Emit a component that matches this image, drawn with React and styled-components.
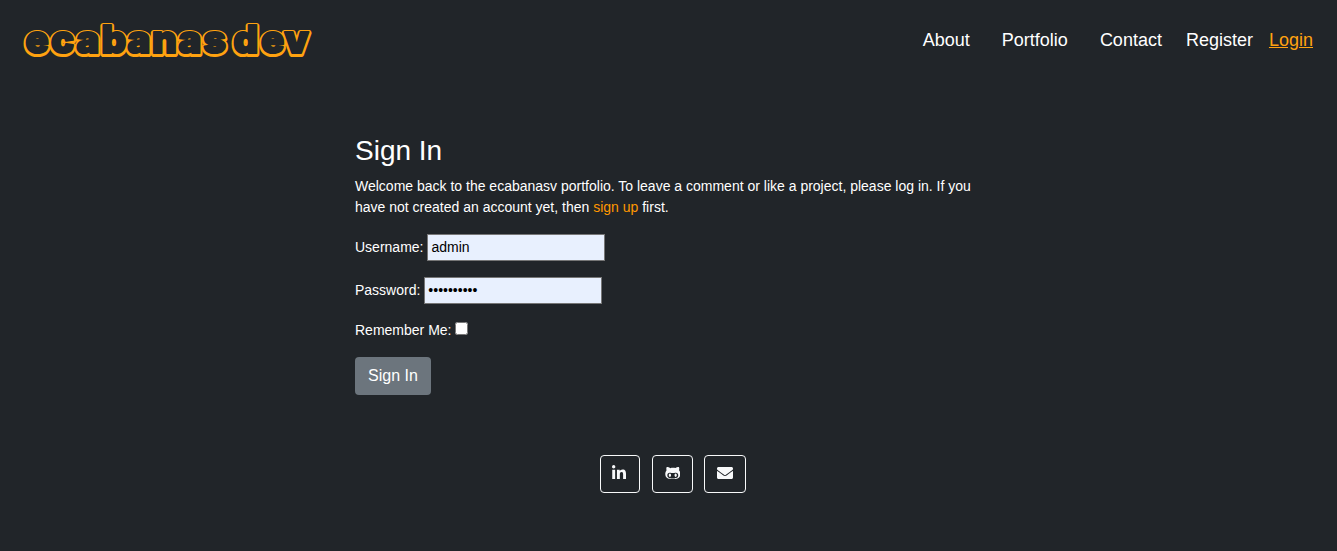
import React from "react";
import styled, { createGlobalStyle } from "styled-components";
import { FaLinkedinIn, FaGithubAlt, FaEnvelope } from "react-icons/fa";

const GlobalStyle = createGlobalStyle`
  *, *::before, *::after { box-sizing: border-box; }
  body {
    margin: 0;
    background: #212529;
    color: #fff;
    font: 14px/21px "Liberation Sans", Arial, sans-serif;
    overflow: hidden;
  }
`;

const Page = styled.div`
  height: 551px;
  display: flex;
  flex-direction: column;
`;

const Header = styled.header`
  height: 80px;
  padding: 0 24px 0 20px;
  display: flex;
  align-items: center;
  justify-content: space-between;
`;

const Logo = styled.svg`
  display: block;
  width: 296px;
  height: 48px;
  font: 900 38px Inter, sans-serif;
  stroke-linejoin: round;
`;

const Nav = styled.nav`
  display: flex;
  font-size: 18px;
  line-height: 27px;
`;

const NavLink = styled.a`
  color: ${(p) => (p.$active ? "#ffa210" : "#fff")};
  text-decoration: ${(p) => (p.$active ? "underline" : "none")};
  margin-left: ${(p) => p.$gap || 0}px;
`;

const Main = styled.main`
  width: 628px;
  margin: 54px 0 0 355px;
`;

const Title = styled.h1`
  margin: 0 0 8px;
  font-size: 28px;
  font-weight: 400;
  line-height: 34px;
`;

const Intro = styled.p`
  margin: 0 0 16px;
`;

const Accent = styled.a`
  color: #ff9800;
`;

const Field = styled.div`
  display: flex;
  align-items: center;
  gap: 4px;
  height: 27px;
  margin-bottom: 16px;
`;

const TextInput = styled.input`
  width: 178px;
  height: 27px;
  padding: 1px 3px 3px;
  border: 1px solid #767676;
  background: #e8f0fe;
  color: #000;
  font: inherit;
`;

const RememberRow = styled.div`
  display: flex;
  align-items: flex-start;
  gap: 4px;
  height: 21px;
  margin-bottom: 16px;
`;

const Checkbox = styled.input`
  width: 13px;
  height: 13px;
  margin: 2px 0 0;
`;

const SubmitButton = styled.button`
  display: block;
  width: 76px;
  height: 38px;
  padding: 0;
  border: 0;
  border-radius: 4px;
  background: #6c757d;
  color: #fff;
  font: 16px/24px "Liberation Sans", Arial, sans-serif;
`;

const Footer = styled.footer`
  display: flex;
  gap: 12px;
  margin: 60px 0 0 600px;
`;

const SocialLink = styled.a`
  display: flex;
  justify-content: center;
  width: ${(p) => p.$width}px;
  height: 38px;
  padding-top: 9px;
  border: 1px solid #f8f9fa;
  border-radius: 4px;
  color: #f8f9fa;

  &:first-child { padding-right: 2px; }
  &:last-child { margin-left: -1px; }

  svg {
    width: ${(p) => p.$icon}px;
    height: 16px;
  }
`;

const letterX = "5.5 31 56.5 81.5 107.5 132 158.5 183.5 197 213.5 241 264.5";

const Brand = () => (
  <Logo viewBox="0 0 296 48" role="img" aria-label="ecabanas dev">
    <text x={letterX} y="37.7" fill="#ffa210" stroke="#ffa210" strokeWidth="6.2" aria-hidden="true" xmlSpace="preserve">
      ecabanas dev
    </text>
    <text x={letterX} y="36.8" fill="#212529" stroke="#212529" strokeWidth="2.1" xmlSpace="preserve">
      ecabanas dev
    </text>
  </Logo>
);

export default function App() {
  return (
    <Page>
      <GlobalStyle />
      <Header>
        <Brand />
        <Nav>
          <NavLink>About</NavLink>
          <NavLink $gap={32}>Portfolio</NavLink>
          <NavLink $gap={32}>Contact</NavLink>
          <NavLink $gap={24}>Register</NavLink>
          <NavLink $gap={16} $active>Login</NavLink>
        </Nav>
      </Header>
      <Main>
        <Title>Sign In</Title>
        <Intro>
          Welcome back to the ecabanasv portfolio. To leave a comment or like a
          project, please log in. If you have not created an account yet, then{" "}
          <Accent>sign up</Accent> first.
        </Intro>
        <Field>
          <label htmlFor="username">Username:</label>
          <TextInput id="username" defaultValue="admin" />
        </Field>
        <Field>
          <label htmlFor="password">Password:</label>
          <TextInput id="password" type="password" defaultValue="adminadmin" />
        </Field>
        <RememberRow>
          <label htmlFor="remember">Remember Me:</label>
          <Checkbox id="remember" type="checkbox" />
        </RememberRow>
        <SubmitButton>Sign In</SubmitButton>
      </Main>
      <Footer>
        <SocialLink $width={40} $icon={14}><FaLinkedinIn /></SocialLink>
        <SocialLink $width={41} $icon={15.5}><FaGithubAlt /></SocialLink>
        <SocialLink $width={42} $icon={16}><FaEnvelope /></SocialLink>
      </Footer>
    </Page>
  );
}
